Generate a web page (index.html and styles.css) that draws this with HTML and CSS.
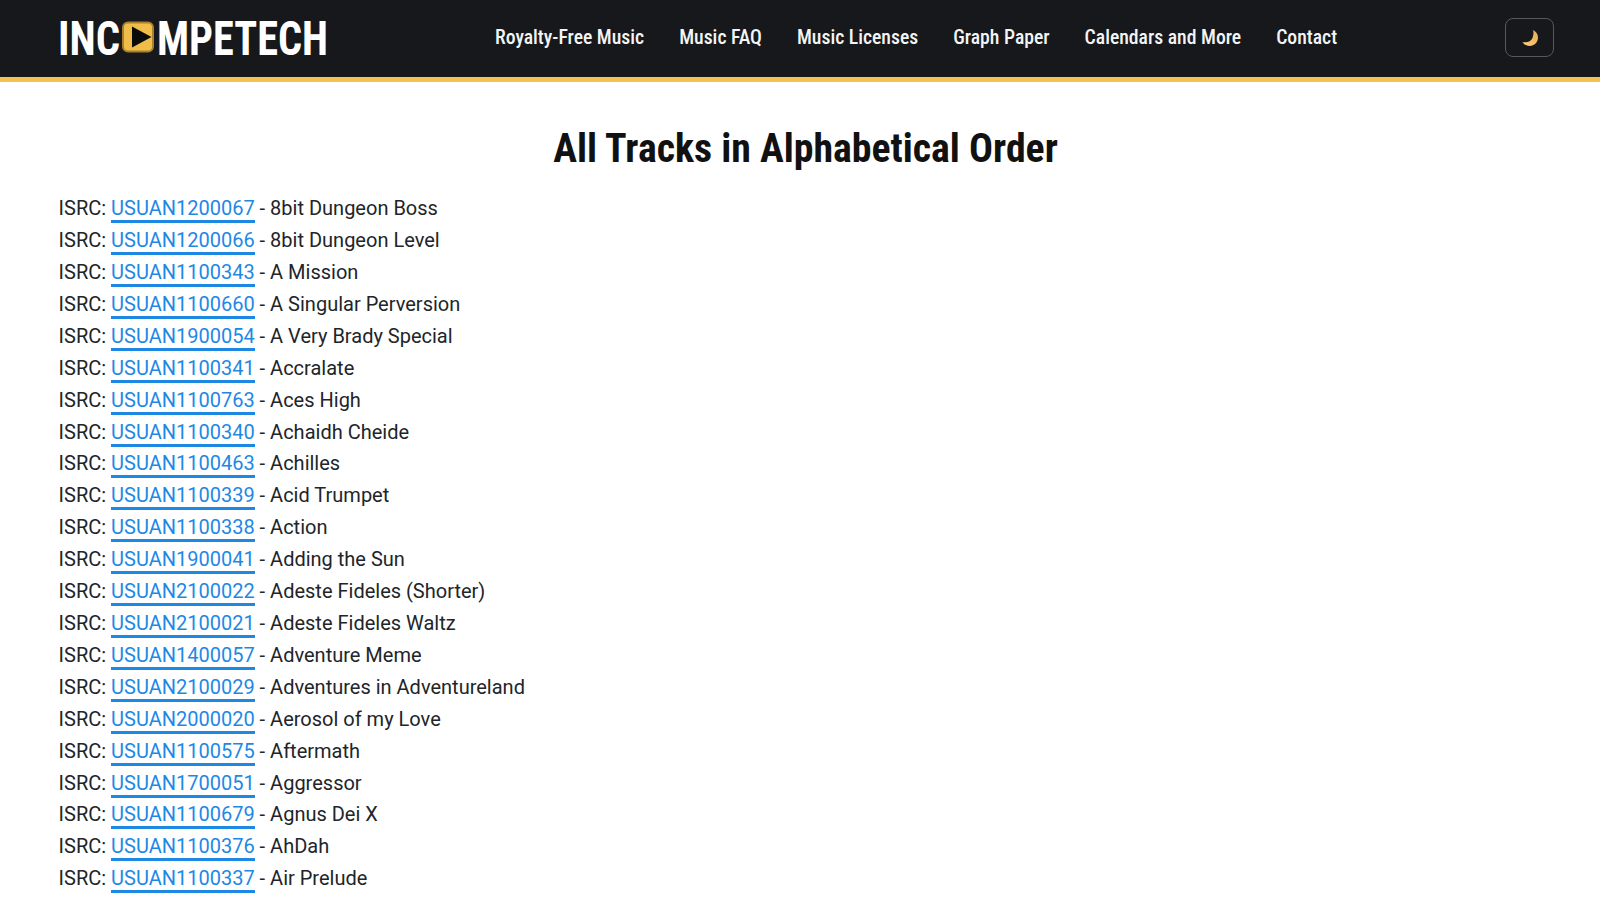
FILE: index.html
```html
<!DOCTYPE html>
<html lang="en">
<head>
    <meta charset="UTF-8">
    <meta name="viewport" content="width=device-width, initial-scale=1.0">
    <title>All Tracks in Alphabetical Order</title>
    <link rel="stylesheet" href="styles.css">
</head>
<body>
<!-- Header -->
<header class="site-header">
    <a class="logo" href="#">
        <svg class="logo-svg" width="272" height="62" viewBox="0 0 272 62">
            <text class="logo-text" x="-1" y="47.500" textLength="62" lengthAdjust="spacingAndGlyphs">INC</text>
            <rect x="64" y="15.500" width="30" height="29" rx="5" fill="#f0bd48" stroke="#a8812c" stroke-width="2"/>
            <path d="M73 19.500 L92.500 30 L73 40.500 Z" fill="#0b0b0b"/>
            <text class="logo-text" x="98" y="47.500" textLength="171" lengthAdjust="spacingAndGlyphs">MPETECH</text>
        </svg>
    </a>
    <nav class="main-nav">
        <a href="#">Royalty-Free Music</a>
        <a href="#">Music FAQ</a>
        <a href="#">Music Licenses</a>
        <a href="#">Graph Paper</a>
        <a href="#">Calendars and More</a>
        <a href="#">Contact</a>
    </nav>
    <button class="theme-btn" aria-label="Toggle theme">
        <svg width="18" height="18" viewBox="0 0 18 18">
            <defs>
                <linearGradient id="moon" x1="0" y1="1" x2="1" y2="0">
                    <stop offset="0" stop-color="#f9cf7a"/>
                    <stop offset="1" stop-color="#eea94f"/>
                </linearGradient>
            </defs>
            <path d="M12 1 C15.500 2.500 17 5.500 17 8.500 C17 13 13.500 17 8.500 17 C5.500 17 3 15.500 1.500 13 C6 14 10 12.500 11.500 9 C12.500 6.500 12.800 3.500 12 1 Z" fill="url(#moon)"/>
        </svg>
    </button>
</header>

<!-- Track list -->
<main class="content">
    <h1>All Tracks in Alphabetical Order</h1>
    <ul class="track-list">
        <li>ISRC: <a href="#">USUAN1200067</a> - 8bit Dungeon Boss</li>
        <li>ISRC: <a href="#">USUAN1200066</a> - 8bit Dungeon Level</li>
        <li>ISRC: <a href="#">USUAN1100343</a> - A Mission</li>
        <li>ISRC: <a href="#">USUAN1100660</a> - A Singular Perversion</li>
        <li>ISRC: <a href="#">USUAN1900054</a> - A Very Brady Special</li>
        <li>ISRC: <a href="#">USUAN1100341</a> - Accralate</li>
        <li>ISRC: <a href="#">USUAN1100763</a> - Aces High</li>
        <li>ISRC: <a href="#">USUAN1100340</a> - Achaidh Cheide</li>
        <li>ISRC: <a href="#">USUAN1100463</a> - Achilles</li>
        <li>ISRC: <a href="#">USUAN1100339</a> - Acid Trumpet</li>
        <li>ISRC: <a href="#">USUAN1100338</a> - Action</li>
        <li>ISRC: <a href="#">USUAN1900041</a> - Adding the Sun</li>
        <li>ISRC: <a href="#">USUAN2100022</a> - Adeste Fideles (Shorter)</li>
        <li>ISRC: <a href="#">USUAN2100021</a> - Adeste Fideles Waltz</li>
        <li>ISRC: <a href="#">USUAN1400057</a> - Adventure Meme</li>
        <li>ISRC: <a href="#">USUAN2100029</a> - Adventures in Adventureland</li>
        <li>ISRC: <a href="#">USUAN2000020</a> - Aerosol of my Love</li>
        <li>ISRC: <a href="#">USUAN1100575</a> - Aftermath</li>
        <li>ISRC: <a href="#">USUAN1700051</a> - Aggressor</li>
        <li>ISRC: <a href="#">USUAN1100679</a> - Agnus Dei X</li>
        <li>ISRC: <a href="#">USUAN1100376</a> - AhDah</li>
        <li>ISRC: <a href="#">USUAN1100337</a> - Air Prelude</li>
    </ul>
</main>
</body>
</html>
```
FILE: styles.css
```css
html, body {
  height: 902px;
  overflow: hidden;
}
body {
  margin: 0;
  font-family: Roboto, sans-serif;
  background-color: #fff;
  color: #212529;
}
.site-header {
  display: flex;
  align-items: center;
  height: 75px;
  padding: 0 46px 2px 59px;
  background-color: #16181c;
  border-bottom: 5px solid #f3c24f;
}
.logo {
  display: block;
  width: 436px;
  height: 62px;
  text-decoration: none;
}
.logo-svg {
  display: block;
  overflow: visible;
}
.logo-text {
  font-family: Roboto, sans-serif;
  font-size: 48px;
  font-weight: 700;
  font-stretch: 75%;
  fill: #fff;
}
.main-nav {
  display: flex;
  gap: 35px;
  flex: 1;
  margin-top: -1px;
}
.main-nav a {
  font-size: 19.700px;
  font-weight: 500;
  font-stretch: 75%;
  color: #f4f4f4;
  text-decoration: none;
}
.theme-btn {
  display: flex;
  align-items: center;
  justify-content: center;
  width: 49px;
  height: 39px;
  padding: 0;
  background: transparent;
  border: 1px solid #55585d;
  border-radius: 8px;
}
.content {
  padding: 0 58.600px;
}
h1 {
  margin: 43px 0 20.200px;
  padding-left: 11px;
  text-align: center;
  font-size: 39.800px;
  line-height: 48px;
  font-weight: 700;
  font-stretch: 75%;
  color: #111;
}
.track-list {
  margin: 0;
  padding: 0;
  list-style: none;
  font-size: 20px;
  line-height: 31.900px;
}
.track-list a {
  color: #1e88e5;
  text-decoration: none;
  border-bottom: 3px solid #1e88e5;
}
```
